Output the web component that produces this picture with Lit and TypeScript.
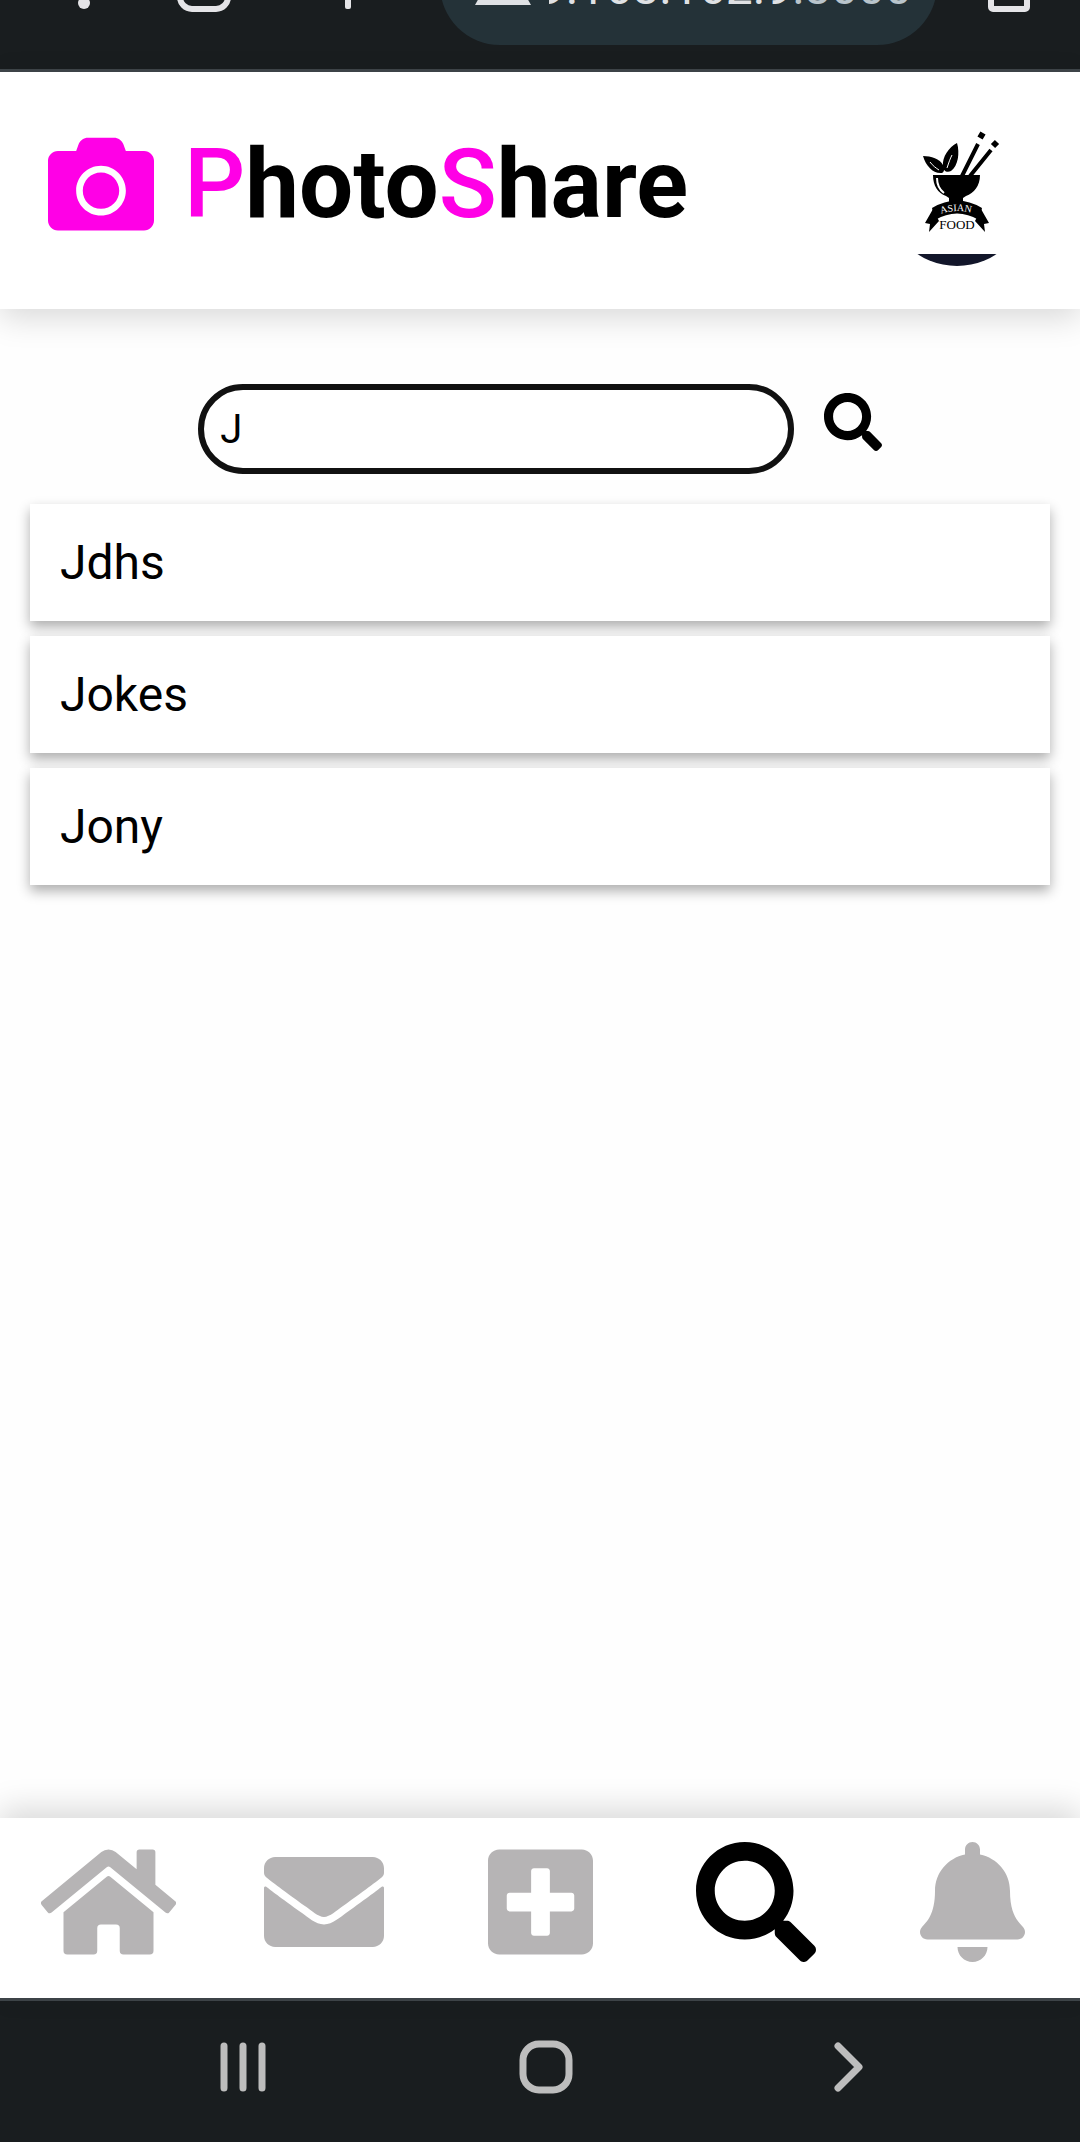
import { LitElement, html, css, svg } from "lit";
import { customElement, state } from "lit/decorators.js";

const ICONS = {
  home: {
    w: 576,
    d: "M280.37 148.26L96 300.11V464a16 16 0 0 0 16 16l112.06-.29a16 16 0 0 0 15.92-16V368a16 16 0 0 1 16-16h64a16 16 0 0 1 16 16v95.64a16 16 0 0 0 16 16.05L464 480a16 16 0 0 0 16-16V300L295.67 148.26a12.19 12.19 0 0 0-15.3 0zM571.6 251.47L488 182.56V44.05a12 12 0 0 0-12-12h-56a12 12 0 0 0-12 12v72.61L318.47 43a48 48 0 0 0-61 0L4.34 251.47a12 12 0 0 0-1.6 16.9l25.5 31A12 12 0 0 0 45.15 301l235.22-193.74a12.19 12.19 0 0 1 15.3 0L530.9 301a12 12 0 0 0 16.9-1.6l25.5-31a12 12 0 0 0-1.7-16.93z",
  },
  mail: {
    w: 512,
    d: "M502.3 190.8c3.9-3.1 9.7-.2 9.7 4.7V400c0 26.5-21.5 48-48 48H48c-26.5 0-48-21.5-48-48V195.6c0-5 5.7-7.8 9.7-4.7 22.4 17.4 52.1 39.5 154.1 113.6 21.1 15.4 56.7 47.8 92.2 47.6 35.7.3 72-32.8 92.3-47.6 102-74.1 131.6-96.3 154-113.7zM256 320c23.2.4 56.6-29.2 73.4-41.4 132.7-96.3 142.8-104.7 173.4-128.7 5.8-4.5 9.2-11.5 9.2-18.9v-19c0-26.5-21.5-48-48-48H48c-26.5 0-48 21.5-48 48v19c0 7.4 3.4 14.3 9.2 18.9 30.6 23.9 40.7 32.4 173.4 128.7 16.8 12.2 50.2 41.8 73.4 41.4z",
  },
  plus: {
    w: 448,
    d: "M400 32H48C21.5 32 0 53.5 0 80v352c0 26.5 21.5 48 48 48h352c26.5 0 48-21.5 48-48V80c0-26.5-21.5-48-48-48zm-32 252c0 6.6-5.4 12-12 12h-92v92c0 6.6-5.4 12-12 12h-56c-6.6 0-12-5.4-12-12v-92H92c-6.6 0-12-5.4-12-12v-56c0-6.6 5.4-12 12-12h92v-92c0-6.6 5.4-12 12-12h56c6.6 0 12 5.4 12 12v92h92c6.6 0 12 5.4 12 12v56z",
  },
  search: {
    w: 512,
    d: "M505 442.7L405.3 343c-4.5-4.5-10.6-7-17-7H372c27.6-35.3 44-79.7 44-128C416 93.1 322.9 0 208 0S0 93.1 0 208s93.1 208 208 208c48.3 0 92.7-16.4 128-44v16.3c0 6.4 2.5 12.5 7 17l99.7 99.7c9.4 9.4 24.6 9.4 33.9 0l28.3-28.3c9.4-9.4 9.4-24.6.1-34zM208 336c-70.7 0-128-57.2-128-128 0-70.7 57.2-128 128-128 70.7 0 128 57.2 128 128 0 70.7-57.2 128-128 128z",
  },
  bell: {
    w: 448,
    d: "M224 512c35.32 0 63.97-28.65 63.97-64H160.03c0 35.35 28.65 64 63.97 64zm215.39-149.71c-19.32-20.76-55.47-51.99-55.47-154.29 0-77.7-54.48-139.9-127.94-155.16V32c0-17.67-14.32-32-31.98-32s-31.98 14.33-31.98 32v20.84C118.56 68.1 64.08 130.3 64.08 208c0 102.3-36.15 133.53-55.47 154.29-6 6.45-8.66 14.16-8.61 21.71.11 16.4 12.98 32 32.1 32h383.8c19.12 0 32-15.6 32.1-32 .05-7.55-2.61-15.27-8.61-21.71z",
  },
  camera: {
    w: 512,
    d: "M512 144v288c0 26.5-21.5 48-48 48H48c-26.5 0-48-21.5-48-48V144c0-26.5 21.5-48 48-48h88l12.3-32.9c7-18.7 24.9-31.1 44.9-31.1h125.5c20 0 37.9 12.4 44.9 31.1L376 96h88c26.5 0 48 21.5 48 48zM376 288c0-66.2-53.8-120-120-120s-120 53.8-120 120 53.8 120 120 120 120-53.8 120-120zm-32 0c0 48.5-39.5 88-88 88s-88-39.5-88-88 39.5-88 88-88 88 39.5 88 88z",
  },
};
type IconName = keyof typeof ICONS;

const icon = (name: IconName) => html`<svg
  class="icon"
  viewBox="0 0 ${ICONS[name].w} 512"
  fill="currentColor"
  aria-hidden="true"
>
  ${svg`<path d=${ICONS[name].d}></path>`}
</svg>`;

@customElement("browser-bar")
export class BrowserBar extends LitElement {
  static styles = css`
    :host {
      display: block;
      height: 69px;
      overflow: hidden;
      background: #191d1f;
      border-bottom: 3px solid #3f464a;
    }
    .row {
      display: grid;
      grid-template-columns: 168fr 72fr 200fr 497fr 143fr;
      height: 45px;
    }
    .slot {
      display: flex;
      justify-content: center;
      align-items: flex-start;
    }
    button {
      display: flex;
      padding: 0;
      border: 0;
      background: none;
    }
    .plus {
      box-sizing: border-box;
      padding-left: 16px;
    }
    .url {
      display: flex;
      align-items: flex-end;
      gap: 18px;
      box-sizing: border-box;
      height: 120px;
      margin-top: -75px;
      padding: 0 25px 25px 35px;
      overflow: hidden;
      border-radius: 60px;
      background: #243238;
      color: #dfe1e4;
      font: 48px/64px Roboto, sans-serif;
      white-space: nowrap;
    }
    .url svg {
      flex: none;
      padding-bottom: 15px;
    }
    .text {
      display: flex;
      flex: 1;
      justify-content: flex-end;
      min-width: 0;
      overflow: hidden;
    }
    .port {
      color: #b9c4cb;
    }
  `;

  render() {
    return html`<div class="row">
      <div class="slot">
        <button aria-label="More">
          <svg width="12" height="9"><circle cx="6" cy="3" r="6" fill="#e4e4e7" /></svg>
        </button>
      </div>
      <div class="slot">
        <button aria-label="Tabs">
          <svg width="54" height="12">
            <rect x="3" y="-39" width="48" height="48" rx="12" fill="none" stroke="#e4e4e7" stroke-width="6" />
          </svg>
        </button>
      </div>
      <div class="slot plus">
        <button aria-label="New tab">
          <svg width="6" height="9"><rect y="-20" width="6" height="29" rx="2" fill="#e4e4e7" /></svg>
        </button>
      </div>
      <div class="url">
        <svg width="56" height="50"><path d="M28 0L56 50H0z" fill="#dfe1e4" /></svg>
        <span class="text"><span>9.168.162.9</span><span class="port">:8000</span></span>
      </div>
      <div class="slot">
        <button aria-label="Home">
          <svg width="42" height="12">
            <rect x="3" y="-39" width="36" height="48" rx="2" fill="none" stroke="#e4e4e7" stroke-width="6" />
          </svg>
        </button>
      </div>
    </div>`;
  }
}

@customElement("app-header")
export class AppHeader extends LitElement {
  static styles = css`
    :host {
      display: flex;
      justify-content: space-between;
      align-items: flex-start;
      box-sizing: border-box;
      height: 237px;
      padding: 50px 51px 0 48px;
      background: #fff;
      box-shadow: 0 9px 30px rgba(0, 0, 0, 0.15);
      font-family: Roboto, sans-serif;
    }
    .brand {
      display: flex;
      align-items: center;
      gap: 30px;
      color: #000;
      text-decoration: none;
    }
    .icon {
      width: 106px;
      height: 106px;
      color: #ff00e6;
    }
    h1 {
      margin: 0;
      font-size: 96px;
      line-height: 124px;
      font-weight: 700;
    }
    .accent {
      color: #ff00e6;
      font-weight: 500;
    }
    .avatar {
      display: block;
      padding: 0;
      border: 0;
      border-radius: 50%;
      overflow: hidden;
      background: #fff;
    }
    .avatar svg {
      display: block;
    }
    .ribbon {
      font: 10px "Liberation Serif", serif;
      fill: #fff;
    }
    .food {
      font: 13px "Liberation Serif", serif;
      fill: #000;
    }
  `;

  render() {
    return html`
      <a class="brand" href="#home">
        ${icon("camera")}
        <h1><span class="accent">P</span>hoto<span class="accent">S</span>hare</h1>
      </a>
      <button class="avatar" aria-label="Profile">
        <svg width="144" height="144" viewBox="885 122 144 144">
          <path d="M885 254h144v14H885z" fill="#12162a" />
          <path d="M923 156c8 0 17 3 20 9 2 4 1 7-1 8-9 1-16-7-19-17z" />
          <path d="M957 143c3 10 1 23-6 28-4 2-8 0-8-5-1-9 6-19 14-23z" />
          <path d="M947 168c2-6 3-9 5-13M930 162c3 4 6 6 9 8" fill="none" stroke="#fff" />
          <path d="M962 176l16-32M970 176l21-26" stroke="#000" stroke-width="4" />
          <path d="M980 138l3-5M993 146l4-4" stroke="#000" stroke-width="6" />
          <path d="M933 175h47c0 11-6 18-14 21l-3 2v5h-14v-5l-3-2c-8-3-13-10-13-21z" />
          <path d="M937 178c0 8 3 12 7 15" fill="none" stroke="#fff" stroke-width="2" />
          <path d="M933 209l-8 14 5 1-1 8 10-11zM981 209l8 14-5 1 1 8-10-11z" />
          <path d="M932 208Q957 193 982 208L979 220Q957 207 935 220z" />
          <path id="arc" d="M941 214Q957 208 975 214" fill="none" />
          <text class="ribbon"><textPath href="#arc">ASIAN</textPath></text>
          <text class="food" x="957" y="229" text-anchor="middle">FOOD</text>
        </svg>
      </button>
    `;
  }
}

@customElement("user-search")
export class UserSearch extends LitElement {
  static styles = css`
    :host {
      display: block;
      padding: 75px 30px 30px;
      font-family: Roboto, sans-serif;
      color: #000;
    }
    .search {
      display: flex;
      justify-content: center;
      gap: 30px;
      margin-bottom: 30px;
    }
    input {
      box-sizing: border-box;
      width: 58.4%;
      height: 90px;
      padding: 0 16px;
      border: 6px solid #111;
      border-radius: 45px;
      outline: 0;
      background: #fff;
      color: #000;
      font: 40px/48px Roboto, sans-serif;
    }
    .go {
      display: flex;
      align-self: flex-start;
      margin-top: 9px;
      padding: 0;
      border: 0;
      background: none;
      color: #000;
    }
    .icon {
      width: 58px;
      height: 58px;
    }
    ul {
      display: grid;
      gap: 15px;
      margin: 0;
      padding: 0;
      list-style: none;
    }
    a {
      display: block;
      padding: 30px;
      background: #fff;
      box-shadow: 0 6px 12px rgba(0, 0, 0, 0.32);
      color: #000;
      font-size: 48px;
      line-height: 57px;
      text-decoration: none;
    }
  `;

  @state() private query = "J";
  private users = ["Jdhs", "Jokes", "Jony"];

  private onInput(e: Event) {
    this.query = (e.target as HTMLInputElement).value;
  }

  render() {
    const q = this.query.toLowerCase();
    const found = this.users.filter((u) => u.toLowerCase().startsWith(q));
    return html`
      <form class="search" @submit=${(e: Event) => e.preventDefault()}>
        <input type="text" aria-label="Search users" .value=${this.query} @input=${this.onInput} />
        <button class="go" aria-label="Search">${icon("search")}</button>
      </form>
      <ul>
        ${found.map((u) => html`<li><a href="#${u}">${u}</a></li>`)}
      </ul>
    `;
  }
}

@customElement("tab-bar")
export class TabBar extends LitElement {
  static styles = css`
    :host {
      display: block;
      background: #fff;
      box-shadow: 0 -9px 30px rgba(0, 0, 0, 0.15);
    }
    nav {
      display: grid;
      grid-template-columns: repeat(5, 1fr);
      height: 180px;
    }
    a {
      display: flex;
      justify-content: center;
      padding-top: 24px;
      color: #b6b4b5;
    }
    .active {
      color: #000;
    }
    .icon {
      height: 120px;
    }
  `;

  private tabs: { name: IconName; label: string }[] = [
    { name: "home", label: "Home" },
    { name: "mail", label: "Messages" },
    { name: "plus", label: "New post" },
    { name: "search", label: "Search" },
    { name: "bell", label: "Notifications" },
  ];

  render() {
    return html`<nav>
      ${this.tabs.map(
        (t) => html`<a class=${t.name === "search" ? "active" : ""} href="#${t.name}" aria-label=${t.label}
          >${icon(t.name)}</a
        >`
      )}
    </nav>`;
  }
}

@customElement("system-bar")
export class SystemBar extends LitElement {
  static styles = css`
    :host {
      display: flex;
      justify-content: space-between;
      align-items: center;
      box-sizing: border-box;
      height: 144px;
      padding: 0 216px 10px 219px;
      border-top: 3px solid #3f464a;
      background: #191d1f;
    }
    button {
      display: flex;
      padding: 0;
      border: 0;
      background: none;
    }
    svg {
      fill: none;
      stroke: #bdbdbd;
      stroke-width: 7;
      stroke-linecap: round;
      stroke-linejoin: round;
    }
  `;

  render() {
    return html`
      <button aria-label="Recent apps">
        <svg width="48" height="54"><path d="M5 6v42M24 6v42M43 6v42" /></svg>
      </button>
      <button aria-label="Home">
        <svg width="54" height="54"><rect x="4" y="4" width="46" height="46" rx="16" /></svg>
      </button>
      <button aria-label="Back">
        <svg width="40" height="54"><path d="M14 6l21 21-21 21" /></svg>
      </button>
    `;
  }
}

@customElement("app-root")
export class AppRoot extends LitElement {
  static styles = css`
    :host {
      display: flex;
      flex-direction: column;
      min-height: 100vh;
      background: #fefefe;
    }
    user-search {
      flex: 1;
    }
    app-header,
    tab-bar {
      z-index: 1;
    }
  `;

  render() {
    return html`
      <browser-bar></browser-bar>
      <app-header></app-header>
      <user-search></user-search>
      <tab-bar></tab-bar>
      <system-bar></system-bar>
    `;
  }
}
